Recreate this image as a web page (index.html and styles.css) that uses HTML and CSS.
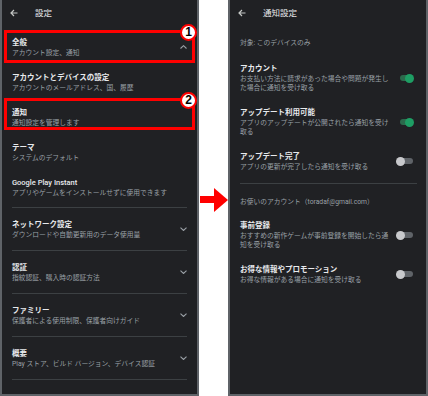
FILE: index.html
```html
<!DOCTYPE html>
<html lang="ja">
<head>
    <meta charset="UTF-8">
    <meta name="viewport" content="width=device-width, initial-scale=1.0">
    <title>設定 → 通知設定</title>
    <link rel="stylesheet" href="styles.css">
</head>
<body>
<div class="page">
    <!-- 設定 -->
    <div class="screen screen-left">
        <div class="bar">
            <svg class="back" viewBox="0 0 8 8"><path d="M7.5 4H1M4 1L1 4l3 3"/></svg>
            <span class="bar-title">設定</span>
        </div>
        <ul class="menu menu-top">
            <li class="item">
                <div class="txt"><p class="ttl">全般</p><p class="sub">アカウント設定、通知</p></div>
                <svg class="chev" viewBox="0 0 7 4"><path d="M0.5 3.5L3.5 0.7l3 2.8"/></svg>
            </li>
            <li class="item">
                <div class="txt"><p class="ttl">アカウントとデバイスの設定</p><p class="sub">アカウントのメールアドレス、国、履歴</p></div>
            </li>
            <li class="item">
                <div class="txt"><p class="ttl">通知</p><p class="sub">通知設定を管理します</p></div>
            </li>
            <li class="item">
                <div class="txt"><p class="ttl">テーマ</p><p class="sub">システムのデフォルト</p></div>
            </li>
            <li class="item">
                <div class="txt"><p class="ttl ttl-latin">Google Play Instant</p><p class="sub">アプリやゲームをインストールせずに使用できます</p></div>
            </li>
        </ul>
        <ul class="menu menu-group">
            <li class="item item-sec">
                <div class="txt"><p class="ttl">ネットワーク設定</p><p class="sub">ダウンロードや自動更新用のデータ使用量</p></div>
                <svg class="chev" viewBox="0 0 7 4"><path d="M0.5 0.7L3.5 3.5l3-2.8"/></svg>
            </li>
            <li class="item item-sec">
                <div class="txt"><p class="ttl">認証</p><p class="sub">指紋認証、購入時の認証方法</p></div>
                <svg class="chev" viewBox="0 0 7 4"><path d="M0.5 0.7L3.5 3.5l3-2.8"/></svg>
            </li>
            <li class="item item-sec">
                <div class="txt"><p class="ttl">ファミリー</p><p class="sub">保護者による使用制限、保護者向けガイド</p></div>
                <svg class="chev" viewBox="0 0 7 4"><path d="M0.5 0.7L3.5 3.5l3-2.8"/></svg>
            </li>
            <li class="item item-sec">
                <div class="txt"><p class="ttl">概要</p><p class="sub">Play ストア、ビルド バージョン、デバイス認証</p></div>
                <svg class="chev" viewBox="0 0 7 4"><path d="M0.5 0.7L3.5 3.5l3-2.8"/></svg>
            </li>
        </ul>

        <!-- 注釈 -->
        <div class="mark mark-1"></div>
        <div class="mark mark-2"></div>
        <div class="num num-1">1</div>
        <div class="num num-2">2</div>
    </div>

    <div class="gap">
        <svg class="arrow" viewBox="0 0 29 24"><rect x="1" y="8" width="15" height="7"/><polygon points="15,0 29,12 15,24"/></svg>
    </div>

    <!-- 通知設定 -->
    <div class="screen screen-right">
        <div class="bar">
            <svg class="back" viewBox="0 0 8 8"><path d="M7.5 4H1M4 1L1 4l3 3"/></svg>
            <span class="bar-title">通知設定</span>
        </div>
        <p class="note">対象: このデバイスのみ</p>
        <ul class="menu opts">
            <li class="opt">
                <div class="txt"><p class="ttl">アカウント</p><p class="sub">お支払い方法に請求があった場合や問題が発生した場合に通知を受け取る</p></div>
                <span class="toggle on"></span>
            </li>
            <li class="opt">
                <div class="txt"><p class="ttl">アップデート利用可能</p><p class="sub">アプリのアップデートが公開されたら通知を受け取る</p></div>
                <span class="toggle on"></span>
            </li>
            <li class="opt">
                <div class="txt"><p class="ttl">アップデート完了</p><p class="sub">アプリの更新が完了したら通知を受け取る</p></div>
                <span class="toggle"></span>
            </li>
        </ul>
        <div class="sep"></div>
        <p class="note note-acc">お使いのアカウント（toradaf@gmail.com）</p>
        <ul class="menu opts opts-acc">
            <li class="opt">
                <div class="txt"><p class="ttl">事前登録</p><p class="sub">おすすめの新作ゲームが事前登録を開始したら通知を受け取る</p></div>
                <span class="toggle"></span>
            </li>
            <li class="opt">
                <div class="txt"><p class="ttl">お得な情報やプロモーション</p><p class="sub">お得な情報がある場合に通知を受け取る</p></div>
                <span class="toggle"></span>
            </li>
        </ul>
    </div>
</div>
</body>
</html>
```

FILE: styles.css
```css
body{
    margin: 0;
    background-color: #fff;
    font-family: Roboto, "Noto Sans CJK JP", sans-serif;
}
.page{
    display: flex;
    height: 396px;
}
.screen{
    position: relative;
    box-sizing: border-box;
    height: 396px;
    background-color: #202124;
    border: 2px solid #5f6368;
    border-top: 0;
    color: #e8eaed;
    overflow: hidden;
}
.screen-left{
    width: 199px;
}
.screen-right{
    width: 200px;
}
.gap{
    box-sizing: border-box;
    width: 29px;
    padding-top: 188px;
}
.arrow{
    display: block;
    width: 29px;
    height: 24px;
    fill: #f00;
}

/* ヘッダー */
.bar{
    display: flex;
    align-items: center;
    height: 26px;
    padding-left: 8px;
}
.back{
    width: 8px;
    height: 8px;
    margin-right: 17px;
    fill: none;
    stroke: #c4c7c5;
    stroke-width: 1.2;
}
.bar-title{
    font-size: 8.5px;
    line-height: 10px;
}

/* リスト */
.menu{
    list-style: none;
    margin: 0;
    padding: 0;
}
.menu-top{
    margin-top: 3.5px;
}
.item{
    display: flex;
    align-items: center;
    margin: 0 10px;
    padding: 7px 0;
}
.txt{
    flex: 1;
    min-width: 0;
}
.ttl{
    margin: 0;
    font-size: 7.5px;
    line-height: 11px;
    font-weight: 700;
}
.ttl-latin{
    font-weight: 500;
}
.sub{
    margin: 0;
    font-size: 6.75px;
    line-height: 10px;
    color: #9aa0a6;
}
.chev{
    flex: none;
    width: 7px;
    height: 4px;
    fill: none;
    stroke: #9aa0a6;
    stroke-width: 1.1;
}
.menu-group{
    margin-top: 2px;
}
.item-sec{
    padding: 11px 0 10px;
    border-top: 1px solid #3c4043;
}
.item-sec:last-child{
    border-bottom: 1px solid #3c4043;
}

/* 注釈 */
.mark{
    position: absolute;
    left: 2px;
    box-sizing: border-box;
    width: 191px;
    border: 3px solid #f00;
}
.mark-1{
    top: 30px;
    height: 33px;
}
.mark-2{
    top: 98px;
    height: 32px;
}
.num{
    position: absolute;
    left: 178px;
    box-sizing: border-box;
    width: 17px;
    height: 17px;
    border: 2px solid #f00;
    border-radius: 50%;
    background-color: #fff;
    color: #000;
    font: bold 12px/13px "Liberation Sans", sans-serif;
    text-align: center;
}
.num-1{
    top: 24px;
}
.num-2{
    top: 91.5px;
}

/* 通知設定 */
.note{
    margin: 12px 10px 0;
    font-size: 6.75px;
    line-height: 10px;
    color: #9aa0a6;
}
.opts{
    margin-top: 8.5px;
}
.opt{
    display: flex;
    align-items: center;
    margin: 0 12px 0 10px;
    padding: 6px 0 7px;
}
.opt .sub{
    max-width: 151px;
    margin-top: 1px;
    line-height: 9.5px;
}
.sep{
    margin: 4px 9px 0 10px;
    border-top: 1px solid #3c4043;
}
.note-acc{
    margin-top: 12.5px;
}
.opts-acc{
    margin-top: 7px;
}
.toggle{
    position: relative;
    flex: none;
    width: 18px;
    height: 10px;
}
.toggle::before{
    content: "";
    position: absolute;
    left: 4px;
    right: 1px;
    top: 2px;
    height: 6px;
    border-radius: 3px;
    background-color: #5f6368;
}
.toggle::after{
    content: "";
    position: absolute;
    left: 0;
    top: 0.5px;
    width: 9px;
    height: 9px;
    border-radius: 50%;
    background-color: #c8c9cc;
}
.toggle.on::before{
    background-color: #2b6a4c;
}
.toggle.on::after{
    left: 9px;
    background-color: #1e9e64;
}
```
